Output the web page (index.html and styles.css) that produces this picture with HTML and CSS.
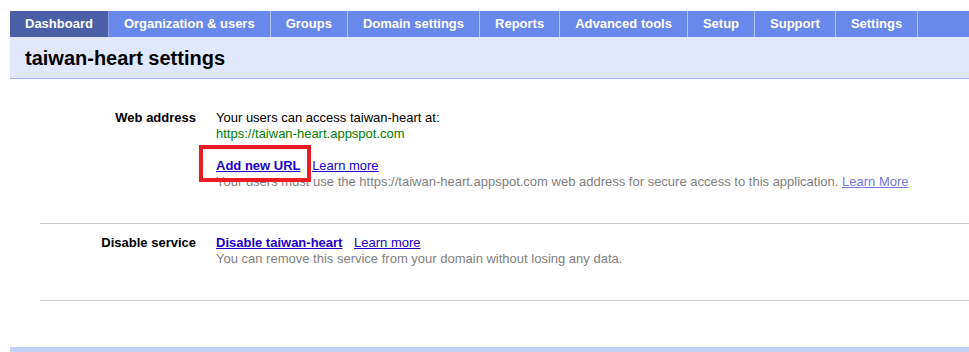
FILE: index.html
```html
<!DOCTYPE html>
<html lang="en">
<head>
<meta charset="UTF-8">
<title>taiwan-heart settings</title>
<link rel="stylesheet" href="styles.css">
</head>
<body>
<div class="tabs">
<a class="tab active" href="#">Dashboard</a>
<a class="tab" href="#">Organization &amp; users</a>
<a class="tab" href="#">Groups</a>
<a class="tab" href="#">Domain settings</a>
<a class="tab" href="#">Reports</a>
<a class="tab" href="#">Advanced tools</a>
<a class="tab" href="#">Setup</a>
<a class="tab" href="#">Support</a>
<a class="tab" href="#">Settings</a>
</div>

<div class="page-header">
<h1>taiwan-heart settings</h1>
</div>

<div class="settings">
<div class="row">
<div class="label">Web address</div>
<div class="value">
<div>Your users can access taiwan-heart at:</div>
<div class="url">https://taiwan-heart.appspot.com</div>
<div class="actions">
<span class="marked">
<a class="strong-link" href="#">Add new URL</a>
<span class="highlight"></span>
</span>
<a href="#">Learn more</a>
</div>
<div class="hint">Your users must use the https://taiwan-heart.appspot.com web address for secure access to this application. <a href="#">Learn More</a></div>
</div>
</div>

<div class="row">
<div class="label">Disable service</div>
<div class="value">
<div class="actions first">
<a class="strong-link" href="#">Disable taiwan-heart</a>
<a href="#">Learn more</a>
</div>
<div class="hint">You can remove this service from your domain without losing any data.</div>
</div>
</div>
</div>

<div class="footer-bar"></div>
</body>
</html>
```

FILE: styles.css
```css
body {
font-family: 'Liberation Sans', Arial, sans-serif;
font-size: 13px;
line-height: 16px;
margin: 0;
padding: 11px 0 0 10px;
color: #000;
background: #fff;
}
a {
color: #2200cc;
}
.tabs {
display: flex;
background-color: #6988ec;
height: 26px;
}
.tab {
display: block;
padding: 0 15px 0 15px;
line-height: 26px;
color: #fff;
font-weight: bold;
text-decoration: none;
border-right: 1px solid #b5c5f5;
}
.tab.active {
background-color: #4a5fa7;
border-right-color: #8ea2e0;
}
.page-header {
background-color: #e1e8fd;
border-bottom: 1px solid #a3b6ef;
height: 41px;
}
.page-header h1 {
margin: 0;
padding: 9px 0 0 15px;
font-size: 20px;
line-height: 24px;
font-weight: bold;
}
.settings {
margin: 31px 0 0 30px;
}
.row {
display: flex;
padding: 11px 0 33px 0;
border-bottom: 1px solid #cccccc;
}
.row:first-child {
padding-top: 0;
}
.label {
width: 156px;
flex-shrink: 0;
text-align: right;
font-weight: bold;
padding-right: 20px;
}
.url {
color: #008000;
}
.actions {
margin-top: 16px;
}
.actions.first {
margin-top: 0;
}
.actions a {
margin-right: 8px;
}
.strong-link {
font-weight: bold;
}
.marked {
position: relative;
}
.highlight {
position: absolute;
left: -17px;
top: -13px;
width: 104px;
height: 29px;
border: 4px solid #ec1c24;
}
.hint {
color: #808080;
}
.hint a {
color: #7777dd;
}
.footer-bar {
margin-top: 46px;
height: 5px;
background-color: #c3d0f5;
}
```
